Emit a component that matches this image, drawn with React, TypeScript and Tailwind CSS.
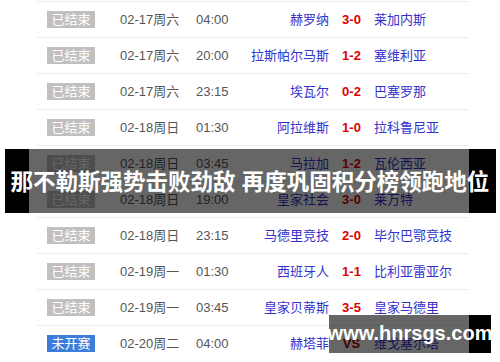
const matches = [
  { status: '已结束', date: '02-17周六', time: '04:00', home: '赫罗纳', score: '3-0', away: '莱加内斯' },
  { status: '已结束', date: '02-17周六', time: '20:00', home: '拉斯帕尔马斯', score: '1-2', away: '塞维利亚' },
  { status: '已结束', date: '02-17周六', time: '23:15', home: '埃瓦尔', score: '0-2', away: '巴塞罗那' },
  { status: '已结束', date: '02-18周日', time: '01:30', home: '阿拉维斯', score: '1-0', away: '拉科鲁尼亚' },
  { status: '已结束', date: '02-18周日', time: '03:45', home: '马拉加', score: '1-2', away: '瓦伦西亚' },
  { status: '已结束', date: '02-18周日', time: '19:00', home: '皇家社会', score: '3-0', away: '莱万特' },
  { status: '已结束', date: '02-18周日', time: '23:15', home: '马德里竞技', score: '2-0', away: '毕尔巴鄂竞技' },
  { status: '已结束', date: '02-19周一', time: '01:30', home: '西班牙人', score: '1-1', away: '比利亚雷亚尔' },
  { status: '已结束', date: '02-19周一', time: '03:45', home: '皇家贝蒂斯', score: '3-5', away: '皇家马德里' },
  { status: '未开赛', date: '02-20周二', time: '04:00', home: '赫塔菲', score: 'VS', away: '维戈塞尔塔' },
];

export default function App() {
  return (
    <div
      className="relative w-[500px] h-[362px] overflow-hidden bg-white"
      style={{ fontFamily: '"Liberation Sans", "Noto Sans CJK SC", sans-serif' }}
    >
      {/* schedule table */}
      <div className="ml-[37px] mt-[1px] w-[431px]">
        {matches.map((m, i) => (
          <div key={i} className="flex h-[36px] items-center border-t border-[#ececec] text-[13px]">
            <span
              className={
                'ml-[10px] w-[48px] h-[17px] leading-[17px] text-center text-[13px] text-white ' +
                (m.status === '未开赛' ? 'bg-[#3b7dd8]' : 'bg-[#c0c0c0]')
              }
            >
              {m.status}
            </span>
            <span className="ml-[25px] w-[76px] text-[#555]">{m.date}</span>
            <span className="w-[40px] text-[#555]">{m.time}</span>
            <span className="w-[93px] text-right text-[#3333cc]">{m.home}</span>
            <span
              className={
                'w-[45px] text-center font-bold ' +
                (m.score === 'VS' ? 'text-[#aa0000]' : 'text-[#e00000]')
              }
            >
              {m.score}
            </span>
            <span className="flex-1 text-[#3333cc]">{m.away}</span>
          </div>
        ))}
      </div>

      {/* title caption band */}
      <div className="absolute left-[5px] top-[149px] h-[64px] w-[24px] bg-black" />
      <div className="absolute left-[29px] top-[149px] h-[64px] w-[440px] bg-black/60" />
      <div className="absolute left-[469px] top-[149px] h-[64px] w-[27px] bg-black" />
      <div className="absolute -left-[20px] -right-[20px] top-[149px] flex h-[64px] items-center justify-center whitespace-nowrap pt-[4px] text-[22.5px] font-bold text-white">
        那不勒斯强势击败劲敌 再度巩固积分榜领跑地位
      </div>

      {/* watermark */}
      <div className="absolute left-[329px] top-[315px] flex h-[38px] w-[162px]">
        <div className="w-[140px] bg-black/60" />
        <div className="w-[22px] bg-black" />
      </div>
      <div className="absolute left-[329px] top-[315px] flex h-[38px] w-[162px] items-center justify-center pb-[2px] text-[20px] font-bold text-white">
        www.hnrsgs.com
      </div>
    </div>
  );
}
